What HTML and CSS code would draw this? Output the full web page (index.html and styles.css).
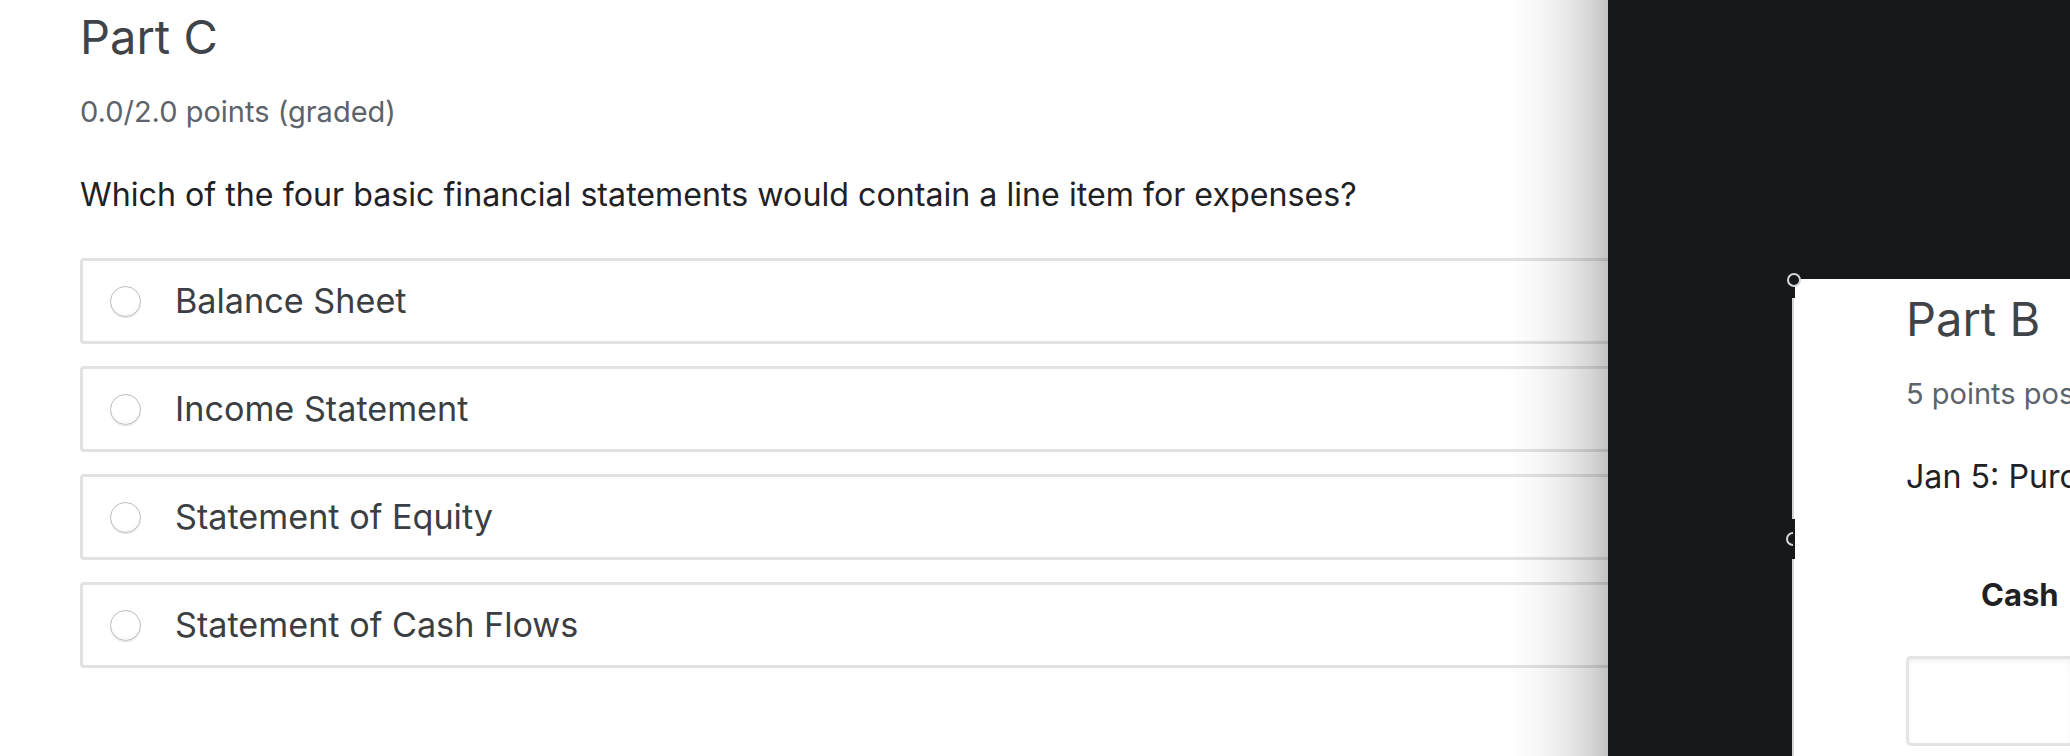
FILE: index.html
```html
<!DOCTYPE html>
<html lang="en">
<head>
<meta charset="utf-8">
<title>Part C</title>
<link rel="stylesheet" href="styles.css">
</head>
<body>
<main class="page">
  <section class="problem">
    <h2 class="problem-title">Part C</h2>
    <div class="problem-points">0.0/2.0 points (graded)</div>
    <p class="problem-question">Which of the four basic financial statements would contain a line item for expenses?</p>
    <div class="choices">
      <label class="choice"><span class="radio"></span><span class="choice-text">Balance Sheet</span></label>
      <label class="choice"><span class="radio"></span><span class="choice-text">Income Statement</span></label>
      <label class="choice"><span class="radio"></span><span class="choice-text">Statement of Equity</span></label>
      <label class="choice"><span class="radio"></span><span class="choice-text">Statement of Cash Flows</span></label>
    </div>
  </section>
</main>

<aside class="overlay">
  <div class="card">
    <section class="problem">
      <h2 class="problem-title">Part B</h2>
      <div class="problem-points">5 points possible (graded)</div>
      <p class="problem-question">Jan 5: Purchased supplies on account</p>
      <div class="col-head">Cash</div>
      <div class="answer-input"></div>
    </section>
  </div>
  <span class="notch notch-top"></span>
  <span class="notch notch-mid"></span>
  <svg class="handle handle-top" width="18" height="18" viewBox="0 0 18 18"><circle cx="9" cy="9" r="6" fill="#17181a" stroke="#d6d7d8" stroke-width="2"/></svg>
  <svg class="handle handle-mid" width="18" height="18" viewBox="0 0 18 18"><path d="M9 3 A6 6 0 0 0 9 15" fill="none" stroke="#d6d7d8" stroke-width="2"/></svg>
</aside>
</body>
</html>
```

FILE: styles.css
```css
html, body {
  margin: 0;
  padding: 0;
  background: #ffffff;
}

body {
  width: 2070px;
  height: 756px;
  overflow: hidden;
  position: relative;
  font-family: Inter, "Noto Sans", "Liberation Sans", sans-serif;
}

.page {
  padding: 9px 0 0 80px;
}

.problem-title {
  margin: 0;
  font-size: 47px;
  line-height: 56px;
  font-weight: 400;
  color: #404449;
  white-space: nowrap;
}

.problem-points {
  margin-top: 29px;
  font-size: 29px;
  line-height: 36px;
  color: #5d636b;
  white-space: nowrap;
}

.problem-question {
  margin: 45px 0 0;
  font-size: 32.2px;
  line-height: 40px;
  color: #1f2225;
  white-space: nowrap;
}

.choices {
  margin-top: 43px;
  display: flex;
  flex-direction: column;
  gap: 22px;
}

.choice {
  display: flex;
  align-items: center;
  height: 80px;
  border: 3px solid #e1e2e3;
  border-radius: 4px;
  padding-left: 27px;
}

.radio {
  flex: none;
  width: 29px;
  height: 29px;
  border-radius: 50%;
  border: 1px solid #bcbdbf;
  background: radial-gradient(circle at 50% 35%, #ffffff 60%, #f1f1f1 100%);
  box-shadow: 0 1px 1px rgba(0, 0, 0, 0.12);
}

.choice-text {
  margin-left: 34px;
  font-size: 34.2px;
  line-height: 40px;
  color: #3b3e42;
  white-space: nowrap;
}

/* dark overlay with floating card */
.overlay {
  position: absolute;
  left: 1608px;
  top: 0;
  right: 0;
  bottom: 0;
  background: #17181a;
}

.overlay::before {
  content: "";
  position: absolute;
  top: 0;
  bottom: 0;
  right: 100%;
  width: 100px;
  background: linear-gradient(to right,
    rgba(0, 0, 0, 0) 0%,
    rgba(0, 0, 0, 0.03) 30%,
    rgba(0, 0, 0, 0.09) 60%,
    rgba(0, 0, 0, 0.17) 85%,
    rgba(0, 0, 0, 0.24) 100%);
}

.card {
  position: absolute;
  left: 184px;
  top: 279px;
  right: 0;
  bottom: 0;
  background: #ffffff;
  border-left: 2px solid #d5d6d7;
  padding: 12px 0 0 112px;
  z-index: 1;
  overflow: hidden;
}

.col-head {
  margin-top: 79px;
  padding-left: 75px;
  font-size: 31px;
  line-height: 38px;
  font-weight: 700;
  color: #1f2124;
  white-space: nowrap;
}

.answer-input {
  margin-top: 42px;
  height: 84px;
  border: 3px solid #e3e4e6;
  border-right: none;
  border-radius: 5px 0 0 5px;
  box-shadow: inset 0 3px 4px rgba(0, 0, 0, 0.05);
}

.notch {
  position: absolute;
  left: 183px;
  width: 4px;
  background: #17181a;
  z-index: 2;
}

.notch-top {
  top: 280px;
  height: 18px;
}

.notch-mid {
  top: 519px;
  height: 40px;
}

.handle {
  position: absolute;
  z-index: 3;
}

.handle-top {
  left: 177px;
  top: 271px;
}

.handle-mid {
  left: 176px;
  top: 530px;
}
```
